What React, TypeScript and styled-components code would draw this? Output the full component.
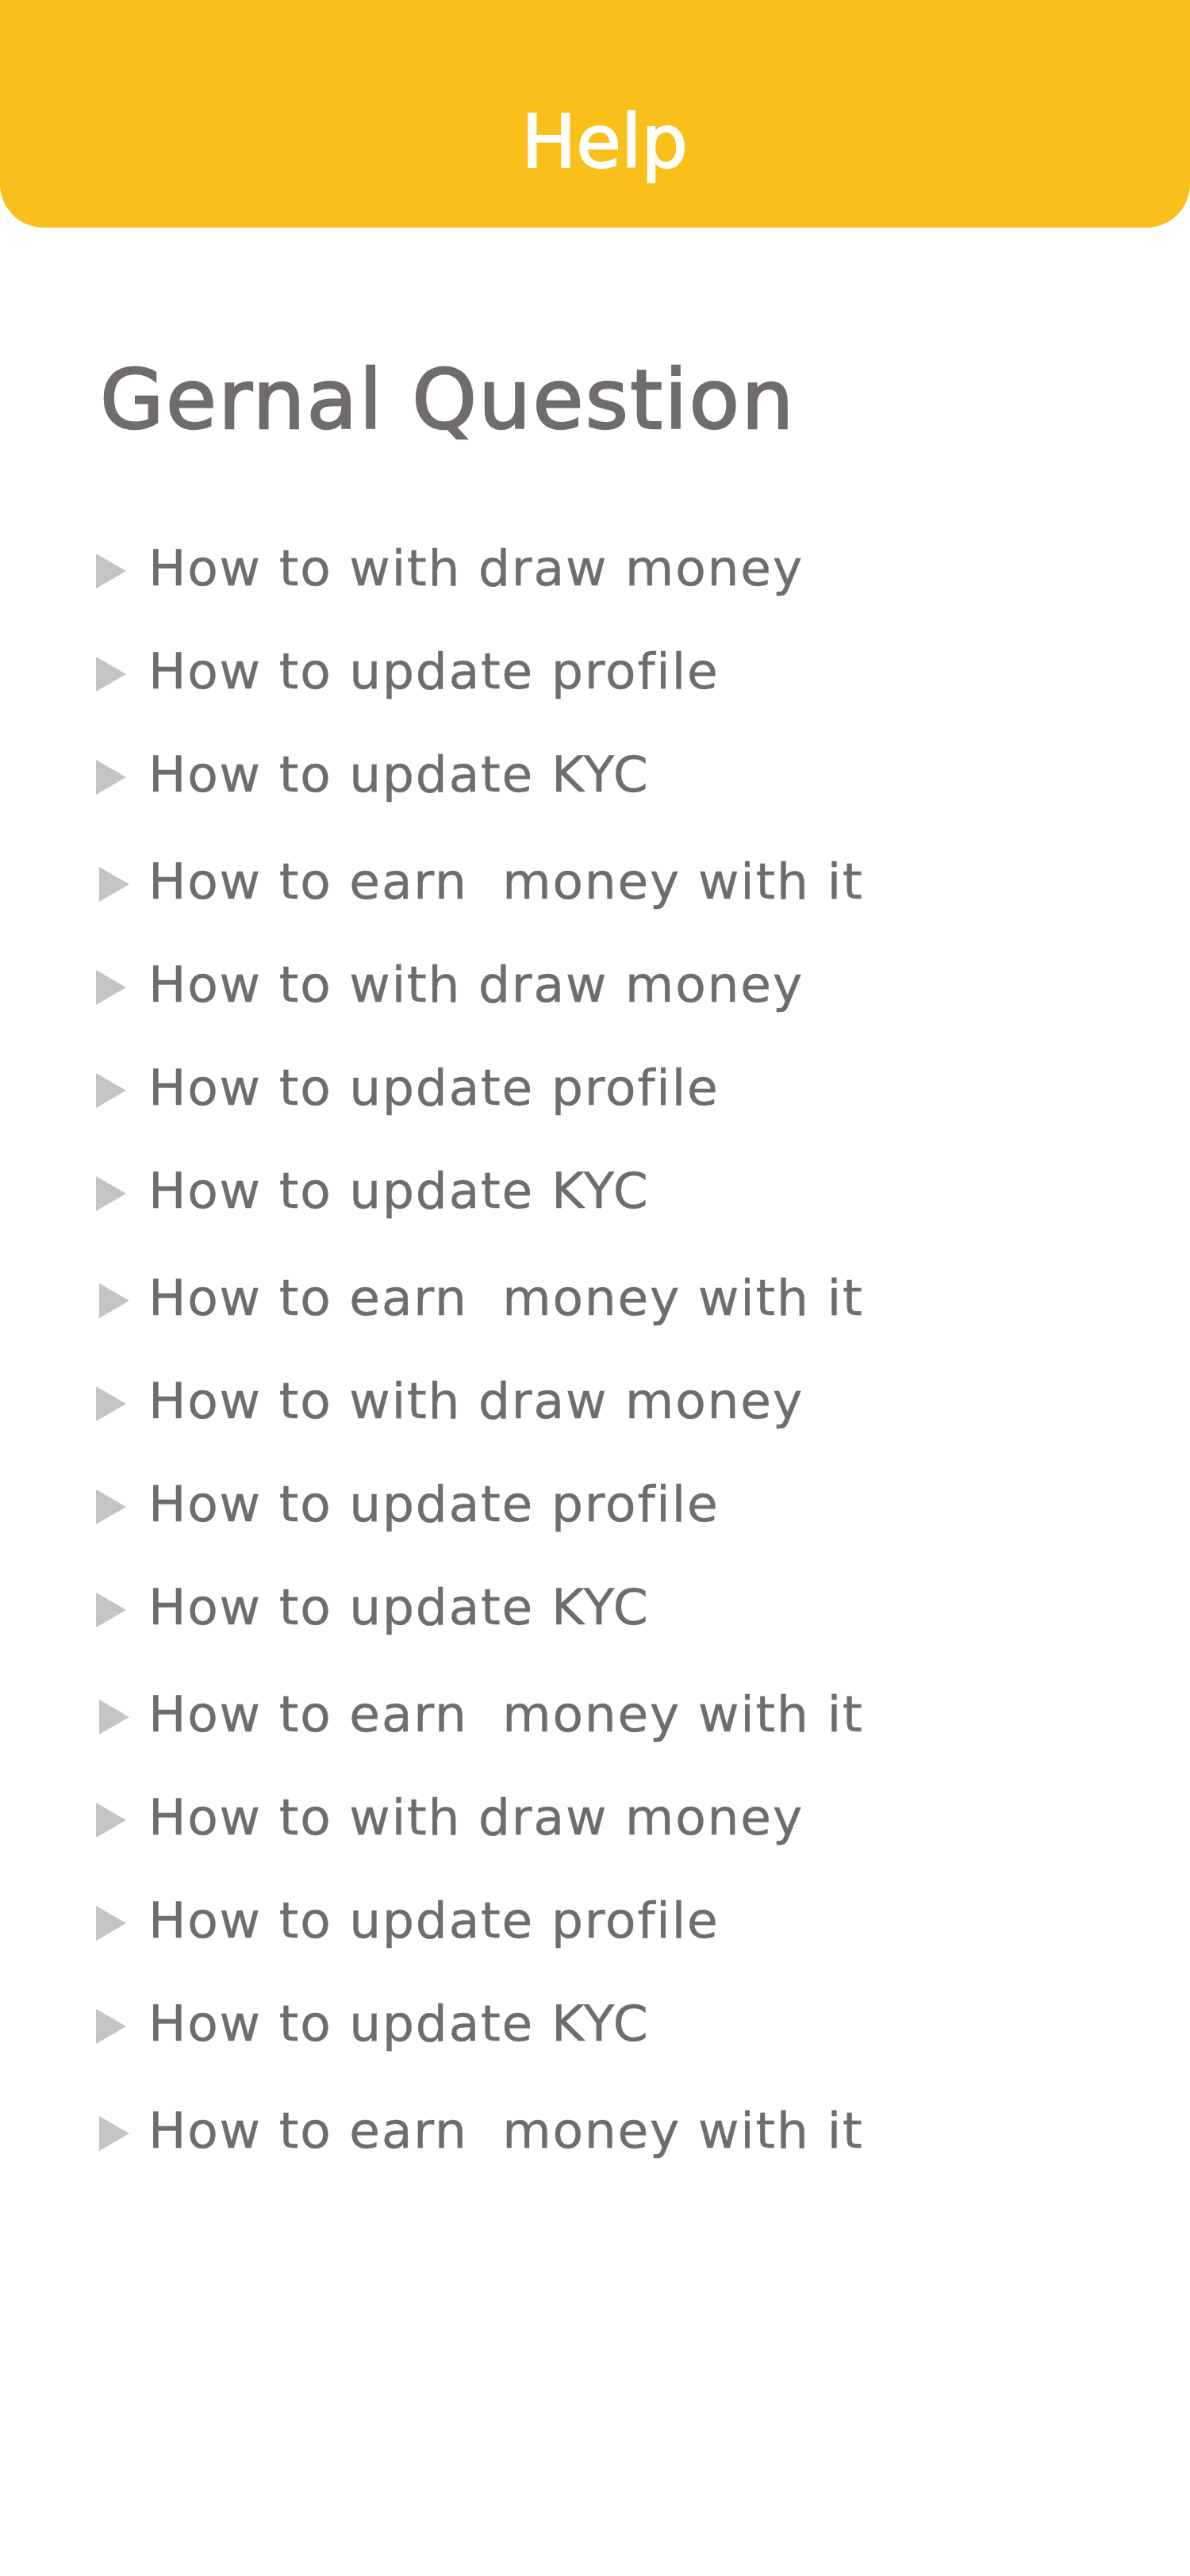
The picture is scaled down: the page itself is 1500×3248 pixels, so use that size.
import React from 'react';
import styled, { createGlobalStyle } from 'styled-components';

const GlobalStyle = createGlobalStyle`
  html, body {
    margin: 0;
    padding: 0;
    background: #ffffff;
  }
  body {
    font-family: 'DejaVu Sans', 'Open Sans', sans-serif;
  }
`;

const questions = [
  'How to with draw money',
  'How to update profile',
  'How to update KYC',
  'How to earn  money with it',
];

const items = [...questions, ...questions, ...questions, ...questions];

const App: React.FC = () => {
  return (
    <Root>
      <GlobalStyle />
      <Header>
        <HeaderTitle>Help</HeaderTitle>
      </Header>
      <Content>
        <SectionTitle>Gernal Question</SectionTitle>
        <List>
          {items.map((q, idx) => (
            <Item key={idx} $wide={idx % 4 === 3}>
              <Arrow $wide={idx % 4 === 3} />
              <ItemText>{q}</ItemText>
            </Item>
          ))}
        </List>
      </Content>
    </Root>
  );
};

export default App;

const Root = styled.div`
  width: 1500px;
  min-height: 3248px;
  background: #ffffff;
`;

const Header = styled.header`
  height: 287px;
  background: #f9c01c;
  border-radius: 0 0 55px 55px;
  display: flex;
  justify-content: center;
  align-items: flex-end;
  box-sizing: border-box;
  padding: 0 0 61px 24px;
`;

const HeaderTitle = styled.h1`
  margin: 0;
  color: #ffffff;
  font-size: 92px;
  font-weight: 400;
  -webkit-text-stroke: 2px #ffffff;
  line-height: 1;
`;

const Content = styled.main`
  padding: 0 0 0 121px;
`;

const SectionTitle = styled.h2`
  margin: 152px 0 0 5px;
  color: #706c6c;
  font-size: 104px;
  font-weight: 400;
  letter-spacing: 2.3px;
  -webkit-text-stroke: 2.4px #706c6c;
  line-height: 130px;
`;

const List = styled.ul`
  list-style: none;
  margin: 82px 0 0;
  padding: 0;
`;

const Item = styled.li<{ $wide: boolean }>`
  display: flex;
  align-items: center;
  height: 130px;
  margin-top: ${({ $wide }) => ($wide ? '5px' : '0')};
`;

const Arrow = styled.span<{ $wide: boolean }>`
  flex: none;
  width: 0;
  height: 0;
  border-top: 22px solid transparent;
  border-bottom: 22px solid transparent;
  border-left: 38px solid #c4c4c4;
  margin-left: ${({ $wide }) => ($wide ? '4px' : '0')};
  margin-right: ${({ $wide }) => ($wide ? '24px' : '28px')};
  margin-top: 8px;
`;

const ItemText = styled.span`
  color: #706c6c;
  font-size: 63px;
  font-weight: 400;
  letter-spacing: 1.8px;
  -webkit-text-stroke: 0.4px #706c6c;
  white-space: pre;
`;
